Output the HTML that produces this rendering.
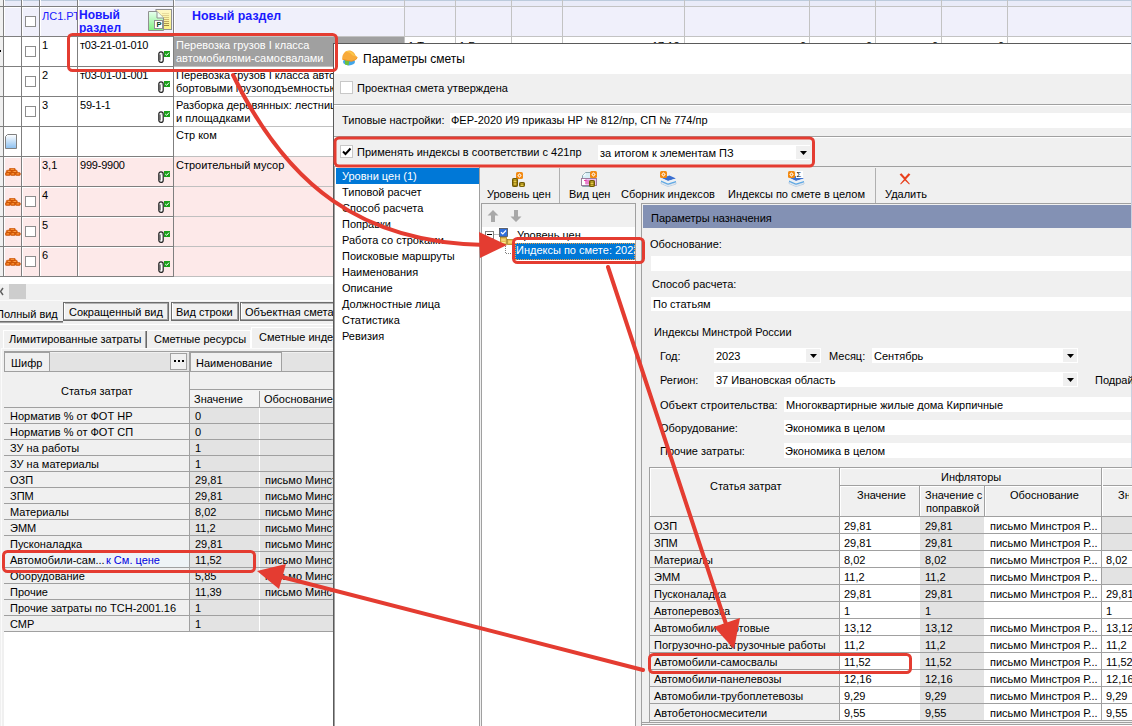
<!DOCTYPE html><html><head><meta charset="utf-8"><style>*{margin:0;padding:0}
html,body{width:1132px;height:726px;overflow:hidden;background:#f0f0f0;font-family:"Liberation Sans",sans-serif;font-size:11px}
div,svg{position:absolute}
.t{white-space:nowrap;line-height:13px}
</style></head><body><div style="left:0px;top:0px;width:1132px;height:278px;background:#ffffff;"></div>
<div style="left:0px;top:0px;width:1132px;height:1px;background:#bccbdc;"></div>
<div style="left:0px;top:1px;width:1132px;height:5px;background:#e9ebf8;"></div>
<div style="left:0px;top:7px;width:1132px;height:29px;background:#f0f0fb;"></div>
<div style="left:0px;top:0px;width:3px;height:278px;background:#f0f0f0;"></div>
<div style="left:4px;top:7px;width:17px;height:1px;background:#ffffff;"></div>
<div style="left:4px;top:37px;width:17px;height:1px;background:#ffffff;"></div>
<div style="left:4px;top:67px;width:17px;height:1px;background:#ffffff;"></div>
<div style="left:4px;top:97px;width:17px;height:1px;background:#ffffff;"></div>
<div style="left:4px;top:127px;width:17px;height:1px;background:#ffffff;"></div>
<div style="left:4px;top:157px;width:17px;height:1px;background:#ffffff;"></div>
<div style="left:4px;top:187px;width:17px;height:1px;background:#ffffff;"></div>
<div style="left:4px;top:217px;width:17px;height:1px;background:#ffffff;"></div>
<div style="left:4px;top:247px;width:17px;height:1px;background:#ffffff;"></div>
<div style="left:4px;top:0px;width:1px;height:276px;background:#ffffff;"></div>
<div style="left:22px;top:7px;width:17px;height:1px;background:#ffffff;"></div>
<div style="left:22px;top:37px;width:17px;height:1px;background:#ffffff;"></div>
<div style="left:22px;top:67px;width:17px;height:1px;background:#ffffff;"></div>
<div style="left:22px;top:97px;width:17px;height:1px;background:#ffffff;"></div>
<div style="left:22px;top:127px;width:17px;height:1px;background:#ffffff;"></div>
<div style="left:22px;top:157px;width:17px;height:1px;background:#ffffff;"></div>
<div style="left:22px;top:187px;width:17px;height:1px;background:#ffffff;"></div>
<div style="left:22px;top:217px;width:17px;height:1px;background:#ffffff;"></div>
<div style="left:22px;top:247px;width:17px;height:1px;background:#ffffff;"></div>
<div style="left:22px;top:0px;width:1px;height:276px;background:#ffffff;"></div>
<div style="left:40px;top:7px;width:37px;height:1px;background:#ffffff;"></div>
<div style="left:40px;top:37px;width:37px;height:1px;background:#ffffff;"></div>
<div style="left:40px;top:67px;width:37px;height:1px;background:#ffffff;"></div>
<div style="left:40px;top:97px;width:37px;height:1px;background:#ffffff;"></div>
<div style="left:40px;top:127px;width:37px;height:1px;background:#ffffff;"></div>
<div style="left:40px;top:157px;width:37px;height:1px;background:#ffffff;"></div>
<div style="left:40px;top:187px;width:37px;height:1px;background:#ffffff;"></div>
<div style="left:40px;top:217px;width:37px;height:1px;background:#ffffff;"></div>
<div style="left:40px;top:247px;width:37px;height:1px;background:#ffffff;"></div>
<div style="left:40px;top:0px;width:1px;height:276px;background:#ffffff;"></div>
<div style="left:78px;top:7px;width:95px;height:1px;background:#ffffff;"></div>
<div style="left:78px;top:37px;width:95px;height:1px;background:#ffffff;"></div>
<div style="left:78px;top:67px;width:95px;height:1px;background:#ffffff;"></div>
<div style="left:78px;top:97px;width:95px;height:1px;background:#ffffff;"></div>
<div style="left:78px;top:127px;width:95px;height:1px;background:#ffffff;"></div>
<div style="left:78px;top:157px;width:95px;height:1px;background:#ffffff;"></div>
<div style="left:78px;top:187px;width:95px;height:1px;background:#ffffff;"></div>
<div style="left:78px;top:217px;width:95px;height:1px;background:#ffffff;"></div>
<div style="left:78px;top:247px;width:95px;height:1px;background:#ffffff;"></div>
<div style="left:78px;top:0px;width:1px;height:276px;background:#ffffff;"></div>
<div style="left:174px;top:7px;width:230px;height:1px;background:#ffffff;"></div>
<div style="left:174px;top:0px;width:1px;height:36px;background:#ffffff;"></div>
<div style="left:5px;top:8px;width:16px;height:28px;background:#f0f0fb;"></div>
<div style="left:5px;top:1px;width:16px;height:5px;background:#e9ebf8;"></div>
<div style="left:23px;top:8px;width:16px;height:28px;background:#f0f0fb;"></div>
<div style="left:23px;top:1px;width:16px;height:5px;background:#e9ebf8;"></div>
<div style="left:41px;top:8px;width:36px;height:28px;background:#f0f0fb;"></div>
<div style="left:41px;top:1px;width:36px;height:5px;background:#e9ebf8;"></div>
<div style="left:79px;top:8px;width:94px;height:28px;background:#f0f0fb;"></div>
<div style="left:79px;top:1px;width:94px;height:5px;background:#e9ebf8;"></div>
<div style="left:175px;top:8px;width:229px;height:28px;background:#f0f0fb;"></div>
<div style="left:175px;top:1px;width:229px;height:5px;background:#e9ebf8;"></div>
<div style="left:5px;top:158px;width:16px;height:28px;background:#fde9e9;"></div>
<div style="left:23px;top:158px;width:16px;height:28px;background:#fde9e9;"></div>
<div style="left:41px;top:158px;width:36px;height:28px;background:#fde9e9;"></div>
<div style="left:79px;top:158px;width:94px;height:28px;background:#fde9e9;"></div>
<div style="left:174px;top:157px;width:160px;height:29px;background:#fde9e9;"></div>
<div style="left:5px;top:188px;width:16px;height:28px;background:#fde9e9;"></div>
<div style="left:23px;top:188px;width:16px;height:28px;background:#fde9e9;"></div>
<div style="left:41px;top:188px;width:36px;height:28px;background:#fde9e9;"></div>
<div style="left:79px;top:188px;width:94px;height:28px;background:#fde9e9;"></div>
<div style="left:174px;top:187px;width:160px;height:29px;background:#fde9e9;"></div>
<div style="left:5px;top:218px;width:16px;height:28px;background:#fde9e9;"></div>
<div style="left:23px;top:218px;width:16px;height:28px;background:#fde9e9;"></div>
<div style="left:41px;top:218px;width:36px;height:28px;background:#fde9e9;"></div>
<div style="left:79px;top:218px;width:94px;height:28px;background:#fde9e9;"></div>
<div style="left:174px;top:217px;width:160px;height:29px;background:#fde9e9;"></div>
<div style="left:5px;top:248px;width:16px;height:28px;background:#fde9e9;"></div>
<div style="left:23px;top:248px;width:16px;height:28px;background:#fde9e9;"></div>
<div style="left:41px;top:248px;width:36px;height:28px;background:#fde9e9;"></div>
<div style="left:79px;top:248px;width:94px;height:28px;background:#fde9e9;"></div>
<div style="left:174px;top:247px;width:160px;height:29px;background:#fde9e9;"></div>
<div style="left:0px;top:6px;width:1133px;height:1px;background:#c3c3c3;"></div>
<div style="left:0px;top:6px;width:174px;height:1px;background:#7f7f7f;"></div>
<div style="left:0px;top:36px;width:1133px;height:1px;background:#c3c3c3;"></div>
<div style="left:0px;top:36px;width:174px;height:1px;background:#7f7f7f;"></div>
<div style="left:0px;top:66px;width:174px;height:1px;background:#7f7f7f;"></div>
<div style="left:174px;top:66px;width:231px;height:1px;background:#c0c0c0;"></div>
<div style="left:0px;top:96px;width:174px;height:1px;background:#7f7f7f;"></div>
<div style="left:174px;top:96px;width:231px;height:1px;background:#c0c0c0;"></div>
<div style="left:0px;top:126px;width:174px;height:1px;background:#7f7f7f;"></div>
<div style="left:174px;top:126px;width:231px;height:1px;background:#c0c0c0;"></div>
<div style="left:0px;top:156px;width:174px;height:1px;background:#7f7f7f;"></div>
<div style="left:174px;top:156px;width:231px;height:1px;background:#c0c0c0;"></div>
<div style="left:0px;top:186px;width:174px;height:1px;background:#7f7f7f;"></div>
<div style="left:174px;top:186px;width:231px;height:1px;background:#c0c0c0;"></div>
<div style="left:0px;top:216px;width:174px;height:1px;background:#7f7f7f;"></div>
<div style="left:174px;top:216px;width:231px;height:1px;background:#c0c0c0;"></div>
<div style="left:0px;top:246px;width:174px;height:1px;background:#7f7f7f;"></div>
<div style="left:174px;top:246px;width:231px;height:1px;background:#c0c0c0;"></div>
<div style="left:0px;top:276px;width:174px;height:1px;background:#7f7f7f;"></div>
<div style="left:174px;top:276px;width:231px;height:1px;background:#c0c0c0;"></div>
<div style="left:3px;top:0px;width:1px;height:277px;background:#7f7f7f;"></div>
<div style="left:21px;top:0px;width:1px;height:277px;background:#7f7f7f;"></div>
<div style="left:39px;top:0px;width:1px;height:277px;background:#7f7f7f;"></div>
<div style="left:77px;top:0px;width:1px;height:277px;background:#7f7f7f;"></div>
<div style="left:173px;top:0px;width:1px;height:277px;background:#7f7f7f;"></div>
<div style="left:0px;top:50px;width:1px;height:2px;background:#000;"></div>
<div style="left:404px;top:0px;width:1px;height:44px;background:#c3c3c3;"></div>
<div style="left:455px;top:0px;width:1px;height:44px;background:#c3c3c3;"></div>
<div style="left:511px;top:0px;width:1px;height:44px;background:#c3c3c3;"></div>
<div style="left:562px;top:0px;width:1px;height:44px;background:#c3c3c3;"></div>
<div style="left:684px;top:0px;width:1px;height:44px;background:#c3c3c3;"></div>
<div style="left:809px;top:0px;width:1px;height:44px;background:#c3c3c3;"></div>
<div style="left:875px;top:0px;width:1px;height:44px;background:#c3c3c3;"></div>
<div style="left:941px;top:0px;width:1px;height:44px;background:#c3c3c3;"></div>
<div style="left:1007px;top:0px;width:1px;height:44px;background:#c3c3c3;"></div>
<div style="left:174px;top:37px;width:230px;height:29px;background:#a0a0a0;"></div>
<div style="left:25px;top:16px;width:11px;height:11px;box-sizing:border-box;border:1px solid #8d8d8d;background:#ffffff;"></div>
<div class="t" style="left:42px;top:10px;font-size:11px;color:#1a1aff;font-weight:400;width:35px;overflow:hidden;">ЛС1.РТ</div>
<div class="t" style="left:79px;top:9px;font-size:12px;color:#1a1aff;font-weight:700;">Новый</div>
<div class="t" style="left:79px;top:22px;font-size:12px;color:#1a1aff;font-weight:700;">раздел</div>
<div class="t" style="left:192px;top:10px;font-size:12.4px;color:#1a1aff;font-weight:700;">Новый раздел</div>
<svg style="left:147px;top:8px" width="26" height="24" viewBox="0 0 26 24">
<defs><linearGradient id="gg" x1="0" y1="0" x2="0" y2="1"><stop offset="0" stop-color="#e8fff0"/><stop offset="1" stop-color="#80f080"/></linearGradient>
<linearGradient id="yg" x1="0" y1="0" x2="0" y2="1"><stop offset="0" stop-color="#fff8c8"/><stop offset="1" stop-color="#f8f080"/></linearGradient></defs>
<rect x="9" y="1.5" width="15.5" height="20" fill="url(#yg)" stroke="#909090"/>
<g stroke-width="1"><line x1="15" y1="5.5" x2="22" y2="5.5" stroke="#e8dca0"/><line x1="15" y1="7.5" x2="22" y2="7.5" stroke="#e0d090"/><line x1="15" y1="9.5" x2="22" y2="9.5" stroke="#d8c880"/><line x1="15" y1="11.5" x2="22" y2="11.5" stroke="#d0b870"/><line x1="15" y1="13.5" x2="22" y2="13.5" stroke="#c0a860"/><line x1="15" y1="15.5" x2="22" y2="15.5" stroke="#b09850"/><line x1="15" y1="17.5" x2="22" y2="17.5" stroke="#a08840"/></g>
<path d="M1.5 3.5 H10 L16.5 10 V22.5 H1.5 Z" fill="url(#gg)" stroke="#909090"/>
<path d="M10 3.5 V10 H16.5" fill="#f0fff4" stroke="#909090"/>
<rect x="7.5" y="12.5" width="8" height="8" fill="#fff" stroke="#909090" stroke-width="1"/>
<text x="9.4" y="19" font-size="7.5" font-family="Liberation Sans" font-weight="700" fill="#042">P</text>
</svg>
<div style="left:25px;top:46px;width:11px;height:11px;box-sizing:border-box;border:1px solid #8d8d8d;background:#ffffff;"></div>
<div class="t" style="left:42px;top:39px;font-size:11px;color:#000;font-weight:400;">1</div>
<div class="t" style="left:80px;top:39px;font-size:11px;color:#000;font-weight:400;letter-spacing:-0.22px">т03-21-01-010</div>
<svg style="left:158px;top:51px" width="13" height="12" viewBox="0 0 13 12">
<rect x="0.8" y="0.8" width="4.4" height="10.6" rx="2.2" fill="#fff" stroke="#222" stroke-width="1.2"/><path d="M2 3.5 V9.5" stroke="#222" stroke-width="1"/><path d="M4.2 2.2 V4" stroke="#777" stroke-width="0.6"/>
<rect x="6" y="0" width="6" height="6" fill="#1aa01a"/>
<path d="M7.2 3 L8.7 4.3 L11 1.6" stroke="#fff" stroke-width="1" fill="none"/>
</svg>
<div class="t" style="left:176px;top:39px;font-size:11px;color:#ffffff;font-weight:400;width:157px;overflow:hidden;">Перевозка грузов I класса</div>
<div class="t" style="left:176px;top:52px;font-size:11px;color:#ffffff;font-weight:400;width:157px;overflow:hidden;">автомобилями-самосвалами</div>
<div style="left:25px;top:76px;width:11px;height:11px;box-sizing:border-box;border:1px solid #8d8d8d;background:#ffffff;"></div>
<div class="t" style="left:42px;top:69px;font-size:11px;color:#000;font-weight:400;">2</div>
<div class="t" style="left:80px;top:69px;font-size:11px;color:#000;font-weight:400;letter-spacing:-0.22px">т03-01-01-001</div>
<svg style="left:158px;top:81px" width="13" height="12" viewBox="0 0 13 12">
<rect x="0.8" y="0.8" width="4.4" height="10.6" rx="2.2" fill="#fff" stroke="#222" stroke-width="1.2"/><path d="M2 3.5 V9.5" stroke="#222" stroke-width="1"/><path d="M4.2 2.2 V4" stroke="#777" stroke-width="0.6"/>
<rect x="6" y="0" width="6" height="6" fill="#1aa01a"/>
<path d="M7.2 3 L8.7 4.3 L11 1.6" stroke="#fff" stroke-width="1" fill="none"/>
</svg>
<div class="t" style="left:176px;top:69px;font-size:11px;color:#000;font-weight:400;width:157px;overflow:hidden;">Перевозка грузов I класса автомобилями</div>
<div class="t" style="left:176px;top:82px;font-size:11px;color:#000;font-weight:400;width:157px;overflow:hidden;">бортовыми грузоподъемностью</div>
<div style="left:25px;top:106px;width:11px;height:11px;box-sizing:border-box;border:1px solid #8d8d8d;background:#ffffff;"></div>
<div class="t" style="left:42px;top:99px;font-size:11px;color:#000;font-weight:400;">3</div>
<div class="t" style="left:80px;top:99px;font-size:11px;color:#000;font-weight:400;letter-spacing:-0.22px">59-1-1</div>
<svg style="left:158px;top:111px" width="13" height="12" viewBox="0 0 13 12">
<rect x="0.8" y="0.8" width="4.4" height="10.6" rx="2.2" fill="#fff" stroke="#222" stroke-width="1.2"/><path d="M2 3.5 V9.5" stroke="#222" stroke-width="1"/><path d="M4.2 2.2 V4" stroke="#777" stroke-width="0.6"/>
<rect x="6" y="0" width="6" height="6" fill="#1aa01a"/>
<path d="M7.2 3 L8.7 4.3 L11 1.6" stroke="#fff" stroke-width="1" fill="none"/>
</svg>
<div class="t" style="left:176px;top:99px;font-size:11px;color:#000;font-weight:400;width:157px;overflow:hidden;">Разборка деревянных:  лестниц</div>
<div class="t" style="left:176px;top:112px;font-size:11px;color:#000;font-weight:400;width:157px;overflow:hidden;">и площадками</div>
<div class="t" style="left:176px;top:129px;font-size:11px;color:#000;font-weight:400;width:157px;overflow:hidden;">Стр ком</div>
<svg style="left:5px;top:134px" width="12" height="15" viewBox="0 0 12 15">
<defs><linearGradient id="dg" x1="0" y1="0" x2="0" y2="1"><stop offset="0" stop-color="#ffffff"/><stop offset="1" stop-color="#8cc0f0"/></linearGradient></defs>
<path d="M2.5 0.5 H11.5 V14.5 H0.5 V2.5 Z" fill="url(#dg)" stroke="#808080"/>
</svg>
<div class="t" style="left:42px;top:159px;font-size:11px;color:#000;font-weight:400;">3,1</div>
<div class="t" style="left:80px;top:159px;font-size:11px;color:#000;font-weight:400;letter-spacing:-0.22px">999-9900</div>
<svg style="left:158px;top:171px" width="13" height="12" viewBox="0 0 13 12">
<rect x="0.8" y="0.8" width="4.4" height="10.6" rx="2.2" fill="#fff" stroke="#222" stroke-width="1.2"/><path d="M2 3.5 V9.5" stroke="#222" stroke-width="1"/><path d="M4.2 2.2 V4" stroke="#777" stroke-width="0.6"/>
<rect x="6" y="0" width="6" height="6" fill="#1aa01a"/>
<path d="M7.2 3 L8.7 4.3 L11 1.6" stroke="#fff" stroke-width="1" fill="none"/>
</svg>
<div class="t" style="left:176px;top:159px;font-size:11px;color:#000;font-weight:400;width:157px;overflow:hidden;">Строительный мусор</div>
<svg style="left:5px;top:168px" width="16" height="8" viewBox="0 0 16 8">
<g fill="#e8680c" stroke="#b84800" stroke-width="0.6">
<rect x="4.3" y="0.3" width="6" height="2.8" rx="1"/>
<rect x="1.3" y="2.3" width="5.5" height="2.8" rx="1"/><rect x="6.8" y="2.3" width="5.5" height="2.8" rx="1"/>
<rect x="0.3" y="4.6" width="5" height="2.8" rx="1"/><rect x="5.3" y="4.6" width="5" height="2.8" rx="1"/><rect x="10.3" y="4.6" width="5" height="2.8" rx="1"/>
</g>
<g stroke="#ffb060" stroke-width="0.7"><line x1="6" y1="1.3" x2="9" y2="1.3"/><line x1="3" y1="3.5" x2="5.5" y2="3.5"/><line x1="8.5" y1="3.5" x2="11" y2="3.5"/><line x1="1.8" y1="5.8" x2="4" y2="5.8"/><line x1="6.8" y1="5.8" x2="9" y2="5.8"/><line x1="11.8" y1="5.8" x2="14" y2="5.8"/></g>
</svg>
<div style="left:25px;top:196px;width:11px;height:11px;box-sizing:border-box;border:1px solid #8d8d8d;background:#ffffff;"></div>
<div class="t" style="left:42px;top:189px;font-size:11px;color:#000;font-weight:400;">4</div>
<svg style="left:158px;top:201px" width="13" height="12" viewBox="0 0 13 12">
<rect x="0.8" y="0.8" width="4.4" height="10.6" rx="2.2" fill="#fff" stroke="#222" stroke-width="1.2"/><path d="M2 3.5 V9.5" stroke="#222" stroke-width="1"/><path d="M4.2 2.2 V4" stroke="#777" stroke-width="0.6"/>
<rect x="6" y="0" width="6" height="6" fill="#1aa01a"/>
<path d="M7.2 3 L8.7 4.3 L11 1.6" stroke="#fff" stroke-width="1" fill="none"/>
</svg>
<svg style="left:5px;top:198px" width="16" height="8" viewBox="0 0 16 8">
<g fill="#e8680c" stroke="#b84800" stroke-width="0.6">
<rect x="4.3" y="0.3" width="6" height="2.8" rx="1"/>
<rect x="1.3" y="2.3" width="5.5" height="2.8" rx="1"/><rect x="6.8" y="2.3" width="5.5" height="2.8" rx="1"/>
<rect x="0.3" y="4.6" width="5" height="2.8" rx="1"/><rect x="5.3" y="4.6" width="5" height="2.8" rx="1"/><rect x="10.3" y="4.6" width="5" height="2.8" rx="1"/>
</g>
<g stroke="#ffb060" stroke-width="0.7"><line x1="6" y1="1.3" x2="9" y2="1.3"/><line x1="3" y1="3.5" x2="5.5" y2="3.5"/><line x1="8.5" y1="3.5" x2="11" y2="3.5"/><line x1="1.8" y1="5.8" x2="4" y2="5.8"/><line x1="6.8" y1="5.8" x2="9" y2="5.8"/><line x1="11.8" y1="5.8" x2="14" y2="5.8"/></g>
</svg>
<div style="left:25px;top:226px;width:11px;height:11px;box-sizing:border-box;border:1px solid #8d8d8d;background:#ffffff;"></div>
<div class="t" style="left:42px;top:219px;font-size:11px;color:#000;font-weight:400;">5</div>
<svg style="left:158px;top:231px" width="13" height="12" viewBox="0 0 13 12">
<rect x="0.8" y="0.8" width="4.4" height="10.6" rx="2.2" fill="#fff" stroke="#222" stroke-width="1.2"/><path d="M2 3.5 V9.5" stroke="#222" stroke-width="1"/><path d="M4.2 2.2 V4" stroke="#777" stroke-width="0.6"/>
<rect x="6" y="0" width="6" height="6" fill="#1aa01a"/>
<path d="M7.2 3 L8.7 4.3 L11 1.6" stroke="#fff" stroke-width="1" fill="none"/>
</svg>
<svg style="left:5px;top:228px" width="16" height="8" viewBox="0 0 16 8">
<g fill="#e8680c" stroke="#b84800" stroke-width="0.6">
<rect x="4.3" y="0.3" width="6" height="2.8" rx="1"/>
<rect x="1.3" y="2.3" width="5.5" height="2.8" rx="1"/><rect x="6.8" y="2.3" width="5.5" height="2.8" rx="1"/>
<rect x="0.3" y="4.6" width="5" height="2.8" rx="1"/><rect x="5.3" y="4.6" width="5" height="2.8" rx="1"/><rect x="10.3" y="4.6" width="5" height="2.8" rx="1"/>
</g>
<g stroke="#ffb060" stroke-width="0.7"><line x1="6" y1="1.3" x2="9" y2="1.3"/><line x1="3" y1="3.5" x2="5.5" y2="3.5"/><line x1="8.5" y1="3.5" x2="11" y2="3.5"/><line x1="1.8" y1="5.8" x2="4" y2="5.8"/><line x1="6.8" y1="5.8" x2="9" y2="5.8"/><line x1="11.8" y1="5.8" x2="14" y2="5.8"/></g>
</svg>
<div style="left:25px;top:256px;width:11px;height:11px;box-sizing:border-box;border:1px solid #8d8d8d;background:#ffffff;"></div>
<div class="t" style="left:42px;top:249px;font-size:11px;color:#000;font-weight:400;">6</div>
<svg style="left:158px;top:261px" width="13" height="12" viewBox="0 0 13 12">
<rect x="0.8" y="0.8" width="4.4" height="10.6" rx="2.2" fill="#fff" stroke="#222" stroke-width="1.2"/><path d="M2 3.5 V9.5" stroke="#222" stroke-width="1"/><path d="M4.2 2.2 V4" stroke="#777" stroke-width="0.6"/>
<rect x="6" y="0" width="6" height="6" fill="#1aa01a"/>
<path d="M7.2 3 L8.7 4.3 L11 1.6" stroke="#fff" stroke-width="1" fill="none"/>
</svg>
<svg style="left:5px;top:258px" width="16" height="8" viewBox="0 0 16 8">
<g fill="#e8680c" stroke="#b84800" stroke-width="0.6">
<rect x="4.3" y="0.3" width="6" height="2.8" rx="1"/>
<rect x="1.3" y="2.3" width="5.5" height="2.8" rx="1"/><rect x="6.8" y="2.3" width="5.5" height="2.8" rx="1"/>
<rect x="0.3" y="4.6" width="5" height="2.8" rx="1"/><rect x="5.3" y="4.6" width="5" height="2.8" rx="1"/><rect x="10.3" y="4.6" width="5" height="2.8" rx="1"/>
</g>
<g stroke="#ffb060" stroke-width="0.7"><line x1="6" y1="1.3" x2="9" y2="1.3"/><line x1="3" y1="3.5" x2="5.5" y2="3.5"/><line x1="8.5" y1="3.5" x2="11" y2="3.5"/><line x1="1.8" y1="5.8" x2="4" y2="5.8"/><line x1="6.8" y1="5.8" x2="9" y2="5.8"/><line x1="11.8" y1="5.8" x2="14" y2="5.8"/></g>
</svg>
<div class="t" style="left:408px;top:40px;font-size:11px;color:#000;font-weight:400;width:40px;overflow:hidden;">1 Т</div>
<div class="t" style="left:459px;top:40px;font-size:11px;color:#000;font-weight:400;width:40px;overflow:hidden;">1 Б</div>
<div class="t" style="left:652px;top:40px;font-size:11px;color:#000;font-weight:400;">17,12</div>
<div class="t" style="left:800px;top:40px;font-size:11px;color:#000;font-weight:400;">0</div>
<div class="t" style="left:866px;top:40px;font-size:11px;color:#000;font-weight:400;">0</div>
<div class="t" style="left:932px;top:40px;font-size:11px;color:#000;font-weight:400;">0</div>
<div class="t" style="left:998px;top:40px;font-size:11px;color:#000;font-weight:400;">0</div>
<div style="left:0px;top:277px;width:333px;height:7px;background:#ffffff;"></div>
<div style="left:0px;top:284px;width:333px;height:442px;background:#f0f0f0;"></div>
<div style="left:9px;top:284px;width:17px;height:15px;background:#cdcdcd;"></div>
<svg style="left:0px;top:287px" width="4" height="9"><path d="M3 1 L0.5 4.5 L3 8" stroke="#606060" stroke-width="1.5" fill="none"/></svg>
<div style="left:0px;top:300px;width:334px;height:1px;background:#fafafa;"></div>
<div style="left:0px;top:301px;width:62px;height:21px;background:#f0f0f0;"></div>
<div style="left:0px;top:321px;width:63px;height:1px;background:#6d6d6d;"></div>
<div style="left:0px;top:322px;width:63px;height:1px;background:#a0a0a0;"></div>
<div class="t" style="left:-4px;top:308px;font-size:11px;color:#000;font-weight:400;">Полный вид</div>
<div style="left:63px;top:302px;width:106px;height:19px;background:#f0f0f0;"></div>
<div style="left:63px;top:302px;width:106px;height:1px;background:#6d6d6d;"></div>
<div style="left:63px;top:303px;width:106px;height:1px;background:#b0b0b0;"></div>
<div style="left:63px;top:302px;width:1px;height:19px;background:#6d6d6d;"></div>
<div style="left:64px;top:303px;width:1px;height:18px;background:#ffffff;"></div>
<div style="left:168px;top:302px;width:1px;height:19px;background:#6d6d6d;"></div>
<div style="left:167px;top:303px;width:1px;height:17px;background:#a0a0a0;"></div>
<div style="left:63px;top:320px;width:106px;height:1px;background:#6d6d6d;"></div>
<div style="left:64px;top:319px;width:104px;height:1px;background:#a0a0a0;"></div>
<div class="t" style="left:69px;top:306px;font-size:11px;color:#000;font-weight:400;width:264px;overflow:hidden;">Сокращенный вид</div>
<div style="left:171px;top:302px;width:68px;height:19px;background:#f0f0f0;"></div>
<div style="left:171px;top:302px;width:68px;height:1px;background:#6d6d6d;"></div>
<div style="left:171px;top:303px;width:68px;height:1px;background:#b0b0b0;"></div>
<div style="left:171px;top:302px;width:1px;height:19px;background:#6d6d6d;"></div>
<div style="left:172px;top:303px;width:1px;height:18px;background:#ffffff;"></div>
<div style="left:238px;top:302px;width:1px;height:19px;background:#6d6d6d;"></div>
<div style="left:237px;top:303px;width:1px;height:17px;background:#a0a0a0;"></div>
<div style="left:171px;top:320px;width:68px;height:1px;background:#6d6d6d;"></div>
<div style="left:172px;top:319px;width:66px;height:1px;background:#a0a0a0;"></div>
<div class="t" style="left:176px;top:306px;font-size:11px;color:#000;font-weight:400;width:157px;overflow:hidden;">Вид строки</div>
<div style="left:240px;top:302px;width:101px;height:19px;background:#f0f0f0;"></div>
<div style="left:240px;top:302px;width:101px;height:1px;background:#6d6d6d;"></div>
<div style="left:240px;top:303px;width:101px;height:1px;background:#b0b0b0;"></div>
<div style="left:240px;top:302px;width:1px;height:19px;background:#6d6d6d;"></div>
<div style="left:241px;top:303px;width:1px;height:18px;background:#ffffff;"></div>
<div style="left:340px;top:302px;width:1px;height:19px;background:#6d6d6d;"></div>
<div style="left:339px;top:303px;width:1px;height:17px;background:#a0a0a0;"></div>
<div style="left:240px;top:320px;width:101px;height:1px;background:#6d6d6d;"></div>
<div style="left:241px;top:319px;width:99px;height:1px;background:#a0a0a0;"></div>
<div class="t" style="left:245px;top:306px;font-size:11px;color:#000;font-weight:400;width:88px;overflow:hidden;">Объектная смета</div>
<div style="left:0px;top:324px;width:334px;height:1px;background:#ffffff;"></div>
<div style="left:3px;top:330px;width:144px;height:18px;background:#f0f0f0;"></div>
<div style="left:3px;top:330px;width:144px;height:1px;background:#ffffff;"></div>
<div style="left:3px;top:330px;width:1px;height:18px;background:#ffffff;"></div>
<div style="left:146px;top:331px;width:1px;height:17px;background:#696969;"></div>
<div style="left:145px;top:331px;width:1px;height:17px;background:#a0a0a0;"></div>
<div class="t" style="left:9px;top:333px;font-size:11px;color:#000;font-weight:400;">Лимитированные затраты</div>
<div style="left:148px;top:330px;width:103px;height:18px;background:#f0f0f0;"></div>
<div style="left:148px;top:330px;width:103px;height:1px;background:#ffffff;"></div>
<div style="left:250px;top:331px;width:1px;height:17px;background:#ffffff;"></div>
<div class="t" style="left:154px;top:333px;font-size:11px;color:#000;font-weight:400;">Сметные ресурсы</div>
<div style="left:251px;top:327px;width:82px;height:21px;background:#f0f0f0;"></div>
<div style="left:251px;top:327px;width:83px;height:1px;background:#ffffff;"></div>
<div style="left:251px;top:327px;width:1px;height:22px;background:#ffffff;"></div>
<div class="t" style="left:259px;top:331px;font-size:11px;color:#000;font-weight:400;width:74px;overflow:hidden;">Сметные индексы</div>
<div style="left:0px;top:348px;width:333px;height:378px;background:#f0f0f0;"></div>
<div style="left:1px;top:348px;width:1px;height:379px;background:#fbfbfb;"></div>
<div style="left:1px;top:348px;width:333px;height:1px;background:#fbfbfb;"></div>
<div style="left:5px;top:372px;width:328px;height:354px;background:#ffffff;"></div>
<div style="left:4px;top:351px;width:1px;height:376px;background:#7a7a7a;"></div>
<div style="left:4px;top:352px;width:329px;height:20px;background:#f0f0f0;"></div>
<div style="left:4px;top:351px;width:330px;height:1px;background:#a0a0a0;"></div>
<div style="left:4px;top:352px;width:46px;height:20px;box-sizing:border-box;border:1px solid #a0a0a0;background:#f0f0f0;"></div>
<div class="t" style="left:11px;top:357px;font-size:11px;color:#000;font-weight:400;">Шифр</div>
<div style="left:50px;top:353px;width:139px;height:18px;background:#e3e3e3;"></div>
<div style="left:170px;top:353px;width:17px;height:17px;box-sizing:border-box;border:1px solid #a0a0a0;background:#f0f0f0;"></div>
<svg style="left:173px;top:360px" width="12" height="3"><rect x="1" y="0" width="2" height="2" fill="#000"/><rect x="5" y="0" width="2" height="2" fill="#000"/><rect x="9" y="0" width="2" height="2" fill="#000"/></svg>
<div style="left:189px;top:352px;width:1px;height:20px;background:#a0a0a0;"></div>
<div style="left:190px;top:352px;width:92px;height:20px;box-sizing:border-box;border:1px solid #a0a0a0;background:#f0f0f0;"></div>
<div class="t" style="left:196px;top:357px;font-size:11px;color:#000;font-weight:400;">Наименование</div>
<div style="left:282px;top:353px;width:51px;height:18px;background:#e3e3e3;"></div>
<div style="left:4px;top:371px;width:330px;height:1px;background:#a0a0a0;"></div>
<div style="left:4px;top:372px;width:329px;height:35px;background:#f0f0f0;"></div>
<div style="left:190px;top:389px;width:144px;height:1px;background:#a0a0a0;"></div>
<div style="left:190px;top:390px;width:143px;height:17px;background:#f3f3f3;"></div>
<div style="left:259px;top:391px;width:1px;height:16px;background:#a0a0a0;"></div>
<div style="left:189px;top:372px;width:1px;height:260px;background:#a0a0a0;"></div>
<div class="t" style="left:61px;top:385px;font-size:11px;color:#000;font-weight:400;">Статья затрат</div>
<div class="t" style="left:194px;top:393px;font-size:11px;color:#000;font-weight:400;">Значение</div>
<div class="t" style="left:264px;top:393px;font-size:11px;color:#000;font-weight:400;width:69px;overflow:hidden;">Обоснование</div>
<div style="left:4px;top:407px;width:330px;height:1px;background:#a0a0a0;"></div>
<div style="left:4px;top:408px;width:185px;height:15px;background:#f0f0f0;"></div>
<div style="left:190px;top:408px;width:69px;height:15px;background:#e3e3e3;"></div>
<div style="left:260px;top:408px;width:73px;height:15px;background:#e3e3e3;"></div>
<div style="left:4px;top:423px;width:330px;height:1px;background:#a0a0a0;"></div>
<div class="t" style="left:10px;top:410px;font-size:11px;color:#000;font-weight:400;">Норматив % от ФОТ НР</div>
<div class="t" style="left:195px;top:410px;font-size:11px;color:#000;font-weight:400;">0</div>
<div style="left:4px;top:424px;width:185px;height:15px;background:#f0f0f0;"></div>
<div style="left:190px;top:424px;width:69px;height:15px;background:#e3e3e3;"></div>
<div style="left:260px;top:424px;width:73px;height:15px;background:#e3e3e3;"></div>
<div style="left:4px;top:439px;width:330px;height:1px;background:#a0a0a0;"></div>
<div class="t" style="left:10px;top:426px;font-size:11px;color:#000;font-weight:400;">Норматив % от ФОТ СП</div>
<div class="t" style="left:195px;top:426px;font-size:11px;color:#000;font-weight:400;">0</div>
<div style="left:4px;top:440px;width:185px;height:15px;background:#f0f0f0;"></div>
<div style="left:190px;top:440px;width:69px;height:15px;background:#e3e3e3;"></div>
<div style="left:260px;top:440px;width:73px;height:15px;background:#e3e3e3;"></div>
<div style="left:4px;top:455px;width:330px;height:1px;background:#a0a0a0;"></div>
<div class="t" style="left:10px;top:442px;font-size:11px;color:#000;font-weight:400;">ЗУ на работы</div>
<div class="t" style="left:195px;top:442px;font-size:11px;color:#000;font-weight:400;">1</div>
<div style="left:4px;top:456px;width:185px;height:15px;background:#f0f0f0;"></div>
<div style="left:190px;top:456px;width:69px;height:15px;background:#e3e3e3;"></div>
<div style="left:260px;top:456px;width:73px;height:15px;background:#e3e3e3;"></div>
<div style="left:4px;top:471px;width:330px;height:1px;background:#a0a0a0;"></div>
<div class="t" style="left:10px;top:458px;font-size:11px;color:#000;font-weight:400;">ЗУ на материалы</div>
<div class="t" style="left:195px;top:458px;font-size:11px;color:#000;font-weight:400;">1</div>
<div style="left:4px;top:472px;width:185px;height:15px;background:#f0f0f0;"></div>
<div style="left:190px;top:472px;width:69px;height:15px;background:#e3e3e3;"></div>
<div style="left:260px;top:472px;width:73px;height:15px;background:#e3e3e3;"></div>
<div style="left:4px;top:487px;width:330px;height:1px;background:#a0a0a0;"></div>
<div class="t" style="left:10px;top:474px;font-size:11px;color:#000;font-weight:400;">ОЗП</div>
<div class="t" style="left:195px;top:474px;font-size:11px;color:#000;font-weight:400;">29,81</div>
<div class="t" style="left:265px;top:474px;font-size:11px;color:#000;font-weight:400;width:68px;overflow:hidden;">письмо Минстроя</div>
<div style="left:4px;top:488px;width:185px;height:15px;background:#f0f0f0;"></div>
<div style="left:190px;top:488px;width:69px;height:15px;background:#e3e3e3;"></div>
<div style="left:260px;top:488px;width:73px;height:15px;background:#e3e3e3;"></div>
<div style="left:4px;top:503px;width:330px;height:1px;background:#a0a0a0;"></div>
<div class="t" style="left:10px;top:490px;font-size:11px;color:#000;font-weight:400;">ЗПМ</div>
<div class="t" style="left:195px;top:490px;font-size:11px;color:#000;font-weight:400;">29,81</div>
<div class="t" style="left:265px;top:490px;font-size:11px;color:#000;font-weight:400;width:68px;overflow:hidden;">письмо Минстроя</div>
<div style="left:4px;top:504px;width:185px;height:15px;background:#f0f0f0;"></div>
<div style="left:190px;top:504px;width:69px;height:15px;background:#e3e3e3;"></div>
<div style="left:260px;top:504px;width:73px;height:15px;background:#e3e3e3;"></div>
<div style="left:4px;top:519px;width:330px;height:1px;background:#a0a0a0;"></div>
<div class="t" style="left:10px;top:506px;font-size:11px;color:#000;font-weight:400;">Материалы</div>
<div class="t" style="left:195px;top:506px;font-size:11px;color:#000;font-weight:400;">8,02</div>
<div class="t" style="left:265px;top:506px;font-size:11px;color:#000;font-weight:400;width:68px;overflow:hidden;">письмо Минстроя</div>
<div style="left:4px;top:520px;width:185px;height:15px;background:#f0f0f0;"></div>
<div style="left:190px;top:520px;width:69px;height:15px;background:#e3e3e3;"></div>
<div style="left:260px;top:520px;width:73px;height:15px;background:#e3e3e3;"></div>
<div style="left:4px;top:535px;width:330px;height:1px;background:#a0a0a0;"></div>
<div class="t" style="left:10px;top:522px;font-size:11px;color:#000;font-weight:400;">ЭММ</div>
<div class="t" style="left:195px;top:522px;font-size:11px;color:#000;font-weight:400;">11,2</div>
<div class="t" style="left:265px;top:522px;font-size:11px;color:#000;font-weight:400;width:68px;overflow:hidden;">письмо Минстроя</div>
<div style="left:4px;top:536px;width:185px;height:15px;background:#f0f0f0;"></div>
<div style="left:190px;top:536px;width:69px;height:15px;background:#e3e3e3;"></div>
<div style="left:260px;top:536px;width:73px;height:15px;background:#e3e3e3;"></div>
<div style="left:4px;top:551px;width:330px;height:1px;background:#a0a0a0;"></div>
<div class="t" style="left:10px;top:538px;font-size:11px;color:#000;font-weight:400;">Пусконаладка</div>
<div class="t" style="left:195px;top:538px;font-size:11px;color:#000;font-weight:400;">29,81</div>
<div class="t" style="left:265px;top:538px;font-size:11px;color:#000;font-weight:400;width:68px;overflow:hidden;">письмо Минстроя</div>
<div style="left:4px;top:552px;width:185px;height:15px;background:#eef3f6;"></div>
<div style="left:190px;top:552px;width:69px;height:15px;background:#e3e3e3;"></div>
<div style="left:260px;top:552px;width:73px;height:15px;background:#e3e3e3;"></div>
<div style="left:4px;top:567px;width:330px;height:1px;background:#a0a0a0;"></div>
<div class="t" style="left:10px;top:554px;font-size:11px;color:#000;font-weight:400;">Автомобили-сам...</div>
<div class="t" style="left:106px;top:554px;font-size:11px;color:#0000e0;font-weight:400;">к См. цене</div>
<div class="t" style="left:195px;top:554px;font-size:11px;color:#000;font-weight:400;">11,52</div>
<div class="t" style="left:265px;top:554px;font-size:11px;color:#000;font-weight:400;width:68px;overflow:hidden;">письмо Минстроя</div>
<div style="left:4px;top:568px;width:185px;height:15px;background:#f0f0f0;"></div>
<div style="left:190px;top:568px;width:69px;height:15px;background:#e3e3e3;"></div>
<div style="left:260px;top:568px;width:73px;height:15px;background:#e3e3e3;"></div>
<div style="left:4px;top:583px;width:330px;height:1px;background:#a0a0a0;"></div>
<div class="t" style="left:10px;top:570px;font-size:11px;color:#000;font-weight:400;">Оборудование</div>
<div class="t" style="left:195px;top:570px;font-size:11px;color:#000;font-weight:400;">5,85</div>
<div class="t" style="left:265px;top:570px;font-size:11px;color:#000;font-weight:400;width:68px;overflow:hidden;">письмо Минстроя</div>
<div style="left:4px;top:584px;width:185px;height:15px;background:#f0f0f0;"></div>
<div style="left:190px;top:584px;width:69px;height:15px;background:#e3e3e3;"></div>
<div style="left:260px;top:584px;width:73px;height:15px;background:#e3e3e3;"></div>
<div style="left:4px;top:599px;width:330px;height:1px;background:#a0a0a0;"></div>
<div class="t" style="left:10px;top:586px;font-size:11px;color:#000;font-weight:400;">Прочие</div>
<div class="t" style="left:195px;top:586px;font-size:11px;color:#000;font-weight:400;">11,39</div>
<div class="t" style="left:265px;top:586px;font-size:11px;color:#000;font-weight:400;width:68px;overflow:hidden;">письмо Минстроя</div>
<div style="left:4px;top:600px;width:185px;height:15px;background:#f0f0f0;"></div>
<div style="left:190px;top:600px;width:69px;height:15px;background:#e3e3e3;"></div>
<div style="left:260px;top:600px;width:73px;height:15px;background:#e3e3e3;"></div>
<div style="left:4px;top:615px;width:330px;height:1px;background:#a0a0a0;"></div>
<div class="t" style="left:10px;top:602px;font-size:11px;color:#000;font-weight:400;">Прочие затраты по ТСН-2001.16</div>
<div class="t" style="left:195px;top:602px;font-size:11px;color:#000;font-weight:400;">1</div>
<div style="left:4px;top:616px;width:185px;height:15px;background:#f0f0f0;"></div>
<div style="left:190px;top:616px;width:69px;height:15px;background:#e3e3e3;"></div>
<div style="left:260px;top:616px;width:73px;height:15px;background:#e3e3e3;"></div>
<div style="left:4px;top:631px;width:330px;height:1px;background:#a0a0a0;"></div>
<div class="t" style="left:10px;top:618px;font-size:11px;color:#000;font-weight:400;">СМР</div>
<div class="t" style="left:195px;top:618px;font-size:11px;color:#000;font-weight:400;">1</div>
<div style="left:4px;top:632px;width:185px;height:94px;background:#ffffff;"></div>
<div style="left:190px;top:632px;width:143px;height:94px;background:#ffffff;"></div>
<div style="left:333px;top:43px;width:799px;height:683px;background:#f0f0f0;"></div>
<div style="left:333px;top:43px;width:1px;height:684px;background:#5a5a5a;"></div>
<div style="left:333px;top:43px;width:800px;height:1px;background:#5a5a5a;"></div>
<div style="left:334px;top:44px;width:798px;height:30px;background:#ffffff;"></div>
<svg style="left:338px;top:47px" width="24" height="22" viewBox="0 0 24 22">
<ellipse cx="11" cy="14.8" rx="6" ry="3.6" fill="#42a6ea"/>
<path d="M7 12 L11.5 13 L10.5 18.4 L7 17.4 Z" fill="#6cc040"/>
<path d="M4.2 12.2 C4.2 6.5 7.5 3.6 11 3.6 C14.5 3.6 16.5 6 17.5 8.5 L19.8 10.5 C18.5 12.5 16 14 13 14.2 L4.5 12.5 Z" fill="#f8aa3a"/>
<path d="M7 4.6 C11 3 15 4.5 17.6 9.5 L19.5 10.6 C17.5 9 15 8.8 14 8 C12.5 6 10 5 7 4.6Z" fill="#fbc74a"/>
<path d="M4.5 12.3 L13 14.2 C15.5 14 17.5 13 19 11.2" stroke="#f39018" stroke-width="0.9" fill="none"/>
</svg>
<div class="t" style="left:363px;top:53px;font-size:12px;color:#000;font-weight:400;">Параметры сметы</div>
<div style="left:340px;top:81px;width:13px;height:13px;box-sizing:border-box;border:1px solid #c8c8c8;background:#ffffff;"></div>
<div class="t" style="left:357px;top:82px;font-size:11px;color:#000;font-weight:400;">Проектная смета утверждена</div>
<div style="left:334px;top:104px;width:799px;height:1px;background:#a0a0a0;"></div>
<div style="left:334px;top:105px;width:799px;height:1px;background:#ffffff;"></div>
<div class="t" style="left:342px;top:114px;font-size:11px;color:#000;font-weight:400;">Типовые настройки:</div>
<div style="left:450px;top:113px;width:682px;height:15px;background:#ffffff;"></div>
<div class="t" style="left:451px;top:114px;font-size:11px;color:#000;font-weight:400;">ФЕР-2020 И9 приказы НР № 812/пр, СП № 774/пр</div>
<div style="left:334px;top:136px;width:799px;height:1px;background:#a0a0a0;"></div>
<div style="left:334px;top:137px;width:799px;height:1px;background:#ffffff;"></div>
<div style="left:340px;top:145px;width:13px;height:13px;box-sizing:border-box;border:1px solid #c8c8c8;background:#ffffff;"></div>
<svg style="left:342px;top:147px" width="10" height="9"><path d="M1 4.5 L3.5 7 L8.5 1.5" stroke="#000" stroke-width="2" fill="none"/></svg>
<div class="t" style="left:357px;top:146px;font-size:11px;color:#000;font-weight:400;">Применять индексы в соответствии с 421пр</div>
<div style="left:598px;top:145px;width:212px;height:15px;background:#ffffff;"></div>
<div class="t" style="left:600px;top:147px;font-size:11px;color:#000;font-weight:400;">за итогом к элементам ПЗ</div>
<div style="left:796px;top:146px;width:14px;height:13px;background:#f0f0f0;"></div>
<svg style="left:800px;top:151px" width="7" height="4"><path d="M0 0 H7 L3.5 4Z" fill="#000"/></svg>
<div style="left:334px;top:166px;width:799px;height:1px;background:#a0a0a0;"></div>
<div style="left:335px;top:167px;width:144px;height:559px;background:#ffffff;"></div>
<div style="left:334px;top:167px;width:1px;height:560px;background:#a0a0a0;"></div>
<div style="left:479px;top:167px;width:1px;height:560px;background:#a0a0a0;"></div>
<div style="left:336px;top:168px;width:143px;height:16px;background:#0078d7;"></div>
<div class="t" style="left:342px;top:170px;font-size:11px;color:#ffffff;font-weight:400;">Уровни цен (1)</div>
<div class="t" style="left:342px;top:186px;font-size:11px;color:#000;font-weight:400;">Типовой расчет</div>
<div class="t" style="left:342px;top:202px;font-size:11px;color:#000;font-weight:400;">Способ расчета</div>
<div class="t" style="left:342px;top:218px;font-size:11px;color:#000;font-weight:400;">Поправки</div>
<div class="t" style="left:342px;top:234px;font-size:11px;color:#000;font-weight:400;">Работа со строками</div>
<div class="t" style="left:342px;top:250px;font-size:11px;color:#000;font-weight:400;">Поисковые маршруты</div>
<div class="t" style="left:342px;top:266px;font-size:11px;color:#000;font-weight:400;">Наименования</div>
<div class="t" style="left:342px;top:282px;font-size:11px;color:#000;font-weight:400;">Описание</div>
<div class="t" style="left:342px;top:298px;font-size:11px;color:#000;font-weight:400;">Должностные лица</div>
<div class="t" style="left:342px;top:314px;font-size:11px;color:#000;font-weight:400;">Статистика</div>
<div class="t" style="left:342px;top:330px;font-size:11px;color:#000;font-weight:400;">Ревизия</div>
<svg style="left:512px;top:172px" width="14" height="16" viewBox="0 0 14 16"><rect x="4" y="0" width="7" height="7" rx="1.6" fill="#f28a12"/><path d="M7.5 1.3 L9.7 3.5 L7.5 5.7 L5.3 3.5Z" fill="#fff"/><circle cx="7.5" cy="3.5" r="0.9" fill="#f28a12"/><rect x="0.5" y="6.5" width="5" height="8" rx="0.8" fill="#7a6000" stroke="#6e5800" stroke-width="1"/><line x1="1.5" y1="8" x2="4.5" y2="8" stroke="#f4d850" stroke-width="1"/><line x1="1.5" y1="9.6" x2="4.5" y2="9.6" stroke="#f4d850" stroke-width="1"/><line x1="1.5" y1="11.2" x2="4.5" y2="11.2" stroke="#f4d850" stroke-width="1"/><line x1="1.5" y1="12.799999999999999" x2="4.5" y2="12.799999999999999" stroke="#f4d850" stroke-width="1"/><rect x="7.5" y="10.5" width="5" height="4" rx="0.8" fill="#7a6000" stroke="#6e5800" stroke-width="1"/><line x1="8.5" y1="12" x2="11.5" y2="12" stroke="#f4d850" stroke-width="1"/><line x1="8.5" y1="13.6" x2="11.5" y2="13.6" stroke="#f4d850" stroke-width="1"/></svg>
<div class="t" style="left:487px;top:188px;font-size:11px;color:#000;font-weight:400;">Уровень цен</div>
<div style="left:559px;top:168px;width:1px;height:35px;background:#b0b0b0;"></div>
<svg style="left:581px;top:171px" width="17" height="17" viewBox="0 0 17 17"><path d="M1.5 15.5 V4.5 L4.5 1.5 H10 V15.5Z" fill="#d8eef6" stroke="#8aa4ac" stroke-width="1"/><path d="M1.8 4.5 L4.5 1.8 V4.5Z" fill="#fff"/><rect x="9" y="0" width="7" height="7" rx="1.6" fill="#f28a12"/><path d="M12.5 1.3 L14.7 3.5 L12.5 5.7 L10.3 3.5Z" fill="#fff"/><circle cx="12.5" cy="3.5" r="0.9" fill="#f28a12"/><rect x="0.5" y="7.5" width="15" height="7" fill="#f0c0f0" stroke="#9c7c9c" stroke-width="1"/><rect x="1" y="8" width="3.5" height="6" fill="#fff"/><path d="M3 9.5 H5.5 M5 8.5 V13 M7 9 V13" stroke="#e030a0" stroke-width="0.9"/><rect x="8.5" y="9.5" width="5" height="6" rx="0.8" fill="#7a6000" stroke="#6e5800" stroke-width="1"/><line x1="9.5" y1="11" x2="12.5" y2="11" stroke="#f4d850" stroke-width="1"/><line x1="9.5" y1="12.6" x2="12.5" y2="12.6" stroke="#f4d850" stroke-width="1"/><line x1="9.5" y1="14.2" x2="12.5" y2="14.2" stroke="#f4d850" stroke-width="1"/></svg>
<div class="t" style="left:569px;top:188px;font-size:11px;color:#000;font-weight:400;">Вид цен</div>
<svg style="left:660px;top:171px" width="17" height="16" viewBox="0 0 17 16"><path d="M1.5 7.0 L9.5 4.5 L16.0 7.5 L8.0 10.0Z" fill="#3a6fd0"/><path d="M1.5 7.0 L8.0 10.0 L16.0 7.5 L16.0 9.0 L8.0 11.5 L1.5 8.5Z" fill="#e8f0f8"/><path d="M1.0 9.5 L8.0 12.5 L16.0 10.0 L16.0 11.5 L8.0 14.0 L1.0 11.0Z" fill="#58a8e8"/><path d="M1.0 11.0 L8.0 14.0 L16.0 11.5 L16.0 13.0 L8.0 15.5 L1.0 12.5Z" fill="#f4f8fc" stroke="#90b0d0" stroke-width="0.5"/><rect x="0" y="0" width="7" height="7" rx="1.6" fill="#f28a12"/><path d="M3.5 1.3 L5.7 3.5 L3.5 5.7 L1.3 3.5Z" fill="#fff"/><circle cx="3.5" cy="3.5" r="0.9" fill="#f28a12"/></svg>
<div class="t" style="left:621px;top:188px;font-size:11px;color:#000;font-weight:400;">Сборник индексов</div>
<svg style="left:788px;top:171px" width="17" height="16" viewBox="0 0 17 16"><path d="M1.5 7.0 L9.5 4.5 L16.0 7.5 L8.0 10.0Z" fill="#3a6fd0"/><path d="M1.5 7.0 L8.0 10.0 L16.0 7.5 L16.0 9.0 L8.0 11.5 L1.5 8.5Z" fill="#e8f0f8"/><path d="M1.0 9.5 L8.0 12.5 L16.0 10.0 L16.0 11.5 L8.0 14.0 L1.0 11.0Z" fill="#58a8e8"/><path d="M1.0 11.0 L8.0 14.0 L16.0 11.5 L16.0 13.0 L8.0 15.5 L1.0 12.5Z" fill="#f4f8fc" stroke="#90b0d0" stroke-width="0.5"/><rect x="0" y="0" width="7" height="7" rx="1.6" fill="#f28a12"/><path d="M3.5 1.3 L5.7 3.5 L3.5 5.7 L1.3 3.5Z" fill="#fff"/><circle cx="3.5" cy="3.5" r="0.9" fill="#f28a12"/><rect x="8" y="0" width="7" height="7" fill="#fff"/><text x="8.6" y="6.3" font-size="7.5" font-family="Liberation Sans" fill="#000">Σ</text></svg>
<div class="t" style="left:728px;top:188px;font-size:11px;color:#000;font-weight:400;">Индексы по смете в целом</div>
<div style="left:875px;top:168px;width:1px;height:35px;background:#b0b0b0;"></div>
<svg style="left:898px;top:172px" width="14" height="14"><path d="M1.6 2.6 L3.4 1.2 L7 5.2 L10.6 1.2 L12.4 2.6 L8 7.3 L11.8 11.8 L11.2 12.4 L7 8.6 L2.8 12.4 L2.2 11.8 L6 7.3 Z" fill="#e8401c"/></svg>
<div class="t" style="left:885px;top:188px;font-size:11px;color:#000;font-weight:400;">Удалить</div>
<div style="left:481px;top:203px;width:155px;height:540px;box-sizing:border-box;border:1px solid #a0a0a0;background:#ffffff;"></div>
<div style="left:482px;top:204px;width:153px;height:23px;background:#f0f0f0;"></div>
<svg style="left:487px;top:210px" width="12" height="12" viewBox="0 0 12 12"><path d="M6 0 L11.5 5.5 H8 V12 H4 V5.5 H0.5Z" fill="#a8a8a8"/></svg>
<svg style="left:510px;top:210px" width="12" height="12" viewBox="0 0 12 12"><path d="M6 12 L11.5 6.5 H8 V0 H4 V6.5 H0.5Z" fill="#a8a8a8"/></svg>
<div style="left:485px;top:231px;width:9px;height:8px;box-sizing:border-box;border:1px solid #808080;background:#fff;"></div>
<div style="left:487px;top:234px;width:5px;height:1px;background:#000;"></div>
<svg style="left:494px;top:234px" width="22" height="22"><path d="M0.5 0.5 H5 M11.5 10 V19.5 H20" stroke="#808080" stroke-width="1" stroke-dasharray="1 1" fill="none"/></svg>
<svg style="left:499px;top:228px" width="18" height="18" viewBox="0 0 18 18">
<rect x="0.5" y="0.5" width="8" height="8" fill="#2f6fdc" stroke="#505050" stroke-width="0.8"/>
<path d="M2 4.3 L3.8 6 L7 2.5" stroke="#fff" stroke-width="1.2" fill="none"/>
<g fill="#e8c050" stroke="#a07810" stroke-width="0.7"><rect x="1.5" y="9.5" width="6" height="7"/><rect x="8.5" y="11.5" width="6" height="5"/></g>
<g stroke="#fff3b0" stroke-width="0.8"><line x1="2.5" y1="12" x2="6.5" y2="12"/><line x1="2.5" y1="14.5" x2="6.5" y2="14.5"/><line x1="9.5" y1="14" x2="13.5" y2="14"/></g>
</svg>
<div class="t" style="left:517px;top:229px;font-size:11px;color:#000;font-weight:400;">Уровень цен</div>
<div style="left:515px;top:243px;width:120px;height:17px;background:#0078d7;"></div>
<div style="left:515px;top:243px;width:120px;height:17px;box-sizing:border-box;border:1px dotted #f0a040;background:transparent;"></div>
<div class="t" style="left:516px;top:244px;font-size:11px;color:#fff;font-weight:400;width:119px;overflow:hidden;">Индексы по смете: 2023</div>
<div style="left:641px;top:203px;width:491px;height:540px;box-sizing:border-box;border:1px solid #a0a0a0;background:#f0f0f0;border-right:none"></div>
<div style="left:643px;top:205px;width:488px;height:23px;background:#8391b4;"></div>
<div style="left:1131px;top:0px;width:1px;height:727px;background:#c8d0e0;"></div>
<div class="t" style="left:651px;top:212px;font-size:11px;color:#000;font-weight:400;">Параметры назначения</div>
<div class="t" style="left:650px;top:238px;font-size:11px;color:#000;font-weight:400;">Обоснование:</div>
<div style="left:651px;top:256px;width:480px;height:15px;background:#ffffff;"></div>
<div class="t" style="left:652px;top:278px;font-size:11px;color:#000;font-weight:400;">Способ расчета:</div>
<div style="left:651px;top:297px;width:480px;height:14px;background:#ffffff;"></div>
<div class="t" style="left:653px;top:298px;font-size:11px;color:#000;font-weight:400;">По статьям</div>
<div class="t" style="left:654px;top:326px;font-size:11px;color:#000;font-weight:400;">Индексы Минстрой России</div>
<div class="t" style="left:660px;top:350px;font-size:11px;color:#000;font-weight:400;">Год:</div>
<div style="left:714px;top:348px;width:107px;height:15px;background:#ffffff;"></div>
<div class="t" style="left:716px;top:350px;font-size:11px;color:#000;font-weight:400;">2023</div>
<div style="left:806px;top:349px;width:14px;height:13px;background:#f0f0f0;"></div>
<svg style="left:810px;top:354px" width="7" height="4"><path d="M0 0 H7 L3.5 4Z" fill="#000"/></svg>
<div class="t" style="left:829px;top:350px;font-size:11px;color:#000;font-weight:400;">Месяц:</div>
<div style="left:872px;top:348px;width:206px;height:15px;background:#ffffff;"></div>
<div class="t" style="left:874px;top:350px;font-size:11px;color:#000;font-weight:400;">Сентябрь</div>
<div style="left:1063px;top:349px;width:14px;height:13px;background:#f0f0f0;"></div>
<svg style="left:1067px;top:354px" width="7" height="4"><path d="M0 0 H7 L3.5 4Z" fill="#000"/></svg>
<div class="t" style="left:660px;top:374px;font-size:11px;color:#000;font-weight:400;">Регион:</div>
<div style="left:714px;top:372px;width:364px;height:15px;background:#ffffff;"></div>
<div class="t" style="left:716px;top:374px;font-size:11px;color:#000;font-weight:400;">37 Ивановская область</div>
<div style="left:1063px;top:373px;width:14px;height:13px;background:#f0f0f0;"></div>
<svg style="left:1067px;top:378px" width="7" height="4"><path d="M0 0 H7 L3.5 4Z" fill="#000"/></svg>
<div class="t" style="left:1095px;top:374px;font-size:11px;color:#000;font-weight:400;width:37px;overflow:hidden;">Подрайон</div>
<div class="t" style="left:660px;top:399px;font-size:11px;color:#000;font-weight:400;">Объект строительства:</div>
<div style="left:784px;top:397px;width:347px;height:15px;background:#ffffff;"></div>
<div class="t" style="left:786px;top:399px;font-size:11px;color:#000;font-weight:400;">Многоквартирные жилые дома Кирпичные</div>
<div class="t" style="left:660px;top:422px;font-size:11px;color:#000;font-weight:400;">Оборудование:</div>
<div style="left:784px;top:420px;width:347px;height:15px;background:#ffffff;"></div>
<div class="t" style="left:785px;top:422px;font-size:11px;color:#000;font-weight:400;">Экономика в целом</div>
<div class="t" style="left:660px;top:445px;font-size:11px;color:#000;font-weight:400;">Прочие затраты:</div>
<div style="left:784px;top:443px;width:347px;height:15px;background:#ffffff;"></div>
<div class="t" style="left:785px;top:445px;font-size:11px;color:#000;font-weight:400;">Экономика в целом</div>
<div style="left:649px;top:467px;width:483px;height:259px;background:#ffffff;"></div>
<div style="left:649px;top:467px;width:484px;height:1px;background:#a0a0a0;"></div>
<div style="left:649px;top:467px;width:1px;height:260px;background:#a0a0a0;"></div>
<div style="left:650px;top:468px;width:482px;height:49px;background:#f0f0f0;"></div>
<div style="left:650px;top:468px;width:483px;height:1px;background:#ffffff;"></div>
<div style="left:650px;top:468px;width:1px;height:49px;background:#ffffff;"></div>
<div style="left:839px;top:468px;width:1px;height:259px;background:#a0a0a0;"></div>
<div style="left:840px;top:469px;width:1px;height:48px;background:#ffffff;"></div>
<div style="left:840px;top:485px;width:293px;height:1px;background:#a0a0a0;"></div>
<div style="left:841px;top:486px;width:292px;height:1px;background:#ffffff;"></div>
<div style="left:1101px;top:468px;width:1px;height:259px;background:#a0a0a0;"></div>
<div style="left:919px;top:486px;width:1px;height:31px;background:#a0a0a0;"></div>
<div style="left:920px;top:487px;width:1px;height:30px;background:#ffffff;"></div>
<div style="left:984px;top:486px;width:1px;height:31px;background:#a0a0a0;"></div>
<div style="left:985px;top:487px;width:1px;height:30px;background:#ffffff;"></div>
<div style="left:1102px;top:469px;width:1px;height:48px;background:#ffffff;"></div>
<div class="t" style="left:710px;top:480px;font-size:11px;color:#000;font-weight:400;">Статья затрат</div>
<div class="t" style="left:941px;top:471px;font-size:11px;color:#000;font-weight:400;">Инфляторы</div>
<div class="t" style="left:857px;top:489px;font-size:11px;color:#000;font-weight:400;">Значение</div>
<div class="t" style="left:925px;top:489px;font-size:11px;color:#000;font-weight:400;">Значение с</div>
<div class="t" style="left:926px;top:502px;font-size:11px;color:#000;font-weight:400;">поправкой</div>
<div class="t" style="left:1010px;top:489px;font-size:11px;color:#000;font-weight:400;">Обоснование</div>
<div class="t" style="left:1118px;top:489px;font-size:11px;color:#000;font-weight:400;width:11px;overflow:hidden;">Значение</div>
<div style="left:649px;top:516px;width:484px;height:1px;background:#a0a0a0;"></div>
<div style="left:650px;top:517px;width:189px;height:16px;background:#f0f0f0;"></div>
<div style="left:920px;top:517px;width:64px;height:16px;background:#e3e3e3;"></div>
<div style="left:1102px;top:517px;width:30px;height:16px;background:#e3e3e3;"></div>
<div style="left:649px;top:533px;width:484px;height:1px;background:#a0a0a0;"></div>
<div class="t" style="left:654px;top:520px;font-size:11px;color:#000;font-weight:400;">ОЗП</div>
<div class="t" style="left:844px;top:520px;font-size:11px;color:#000;font-weight:400;">29,81</div>
<div class="t" style="left:925px;top:520px;font-size:11px;color:#000;font-weight:400;">29,81</div>
<div class="t" style="left:990px;top:520px;font-size:11px;color:#000;font-weight:400;width:111px;overflow:hidden;">письмо Минстроя Р...</div>
<div style="left:650px;top:534px;width:189px;height:16px;background:#f0f0f0;"></div>
<div style="left:920px;top:534px;width:64px;height:16px;background:#e3e3e3;"></div>
<div style="left:1102px;top:534px;width:30px;height:16px;background:#e3e3e3;"></div>
<div style="left:649px;top:550px;width:484px;height:1px;background:#a0a0a0;"></div>
<div class="t" style="left:654px;top:537px;font-size:11px;color:#000;font-weight:400;">ЗПМ</div>
<div class="t" style="left:844px;top:537px;font-size:11px;color:#000;font-weight:400;">29,81</div>
<div class="t" style="left:925px;top:537px;font-size:11px;color:#000;font-weight:400;">29,81</div>
<div class="t" style="left:990px;top:537px;font-size:11px;color:#000;font-weight:400;width:111px;overflow:hidden;">письмо Минстроя Р...</div>
<div style="left:650px;top:551px;width:189px;height:16px;background:#f0f0f0;"></div>
<div style="left:920px;top:551px;width:64px;height:16px;background:#e3e3e3;"></div>
<div style="left:649px;top:567px;width:484px;height:1px;background:#a0a0a0;"></div>
<div class="t" style="left:654px;top:554px;font-size:11px;color:#000;font-weight:400;">Материалы</div>
<div class="t" style="left:844px;top:554px;font-size:11px;color:#000;font-weight:400;">8,02</div>
<div class="t" style="left:925px;top:554px;font-size:11px;color:#000;font-weight:400;">8,02</div>
<div class="t" style="left:990px;top:554px;font-size:11px;color:#000;font-weight:400;width:111px;overflow:hidden;">письмо Минстроя Р...</div>
<div class="t" style="left:1106px;top:554px;font-size:11px;color:#000;font-weight:400;width:26px;overflow:hidden;">8,02</div>
<div style="left:650px;top:568px;width:189px;height:16px;background:#f0f0f0;"></div>
<div style="left:920px;top:568px;width:64px;height:16px;background:#e3e3e3;"></div>
<div style="left:1102px;top:568px;width:30px;height:16px;background:#e3e3e3;"></div>
<div style="left:649px;top:584px;width:484px;height:1px;background:#a0a0a0;"></div>
<div class="t" style="left:654px;top:571px;font-size:11px;color:#000;font-weight:400;">ЭММ</div>
<div class="t" style="left:844px;top:571px;font-size:11px;color:#000;font-weight:400;">11,2</div>
<div class="t" style="left:925px;top:571px;font-size:11px;color:#000;font-weight:400;">11,2</div>
<div class="t" style="left:990px;top:571px;font-size:11px;color:#000;font-weight:400;width:111px;overflow:hidden;">письмо Минстроя Р...</div>
<div style="left:650px;top:585px;width:189px;height:16px;background:#f0f0f0;"></div>
<div style="left:920px;top:585px;width:64px;height:16px;background:#e3e3e3;"></div>
<div style="left:649px;top:601px;width:484px;height:1px;background:#a0a0a0;"></div>
<div class="t" style="left:654px;top:588px;font-size:11px;color:#000;font-weight:400;">Пусконаладка</div>
<div class="t" style="left:844px;top:588px;font-size:11px;color:#000;font-weight:400;">29,81</div>
<div class="t" style="left:925px;top:588px;font-size:11px;color:#000;font-weight:400;">29,81</div>
<div class="t" style="left:990px;top:588px;font-size:11px;color:#000;font-weight:400;width:111px;overflow:hidden;">письмо Минстроя Р...</div>
<div class="t" style="left:1106px;top:588px;font-size:11px;color:#000;font-weight:400;width:26px;overflow:hidden;">29,81</div>
<div style="left:650px;top:602px;width:189px;height:16px;background:#f0f0f0;"></div>
<div style="left:920px;top:602px;width:64px;height:16px;background:#e3e3e3;"></div>
<div style="left:649px;top:618px;width:484px;height:1px;background:#a0a0a0;"></div>
<div class="t" style="left:654px;top:605px;font-size:11px;color:#000;font-weight:400;">Автоперевозка</div>
<div class="t" style="left:844px;top:605px;font-size:11px;color:#000;font-weight:400;">1</div>
<div class="t" style="left:925px;top:605px;font-size:11px;color:#000;font-weight:400;">1</div>
<div class="t" style="left:1106px;top:605px;font-size:11px;color:#000;font-weight:400;width:26px;overflow:hidden;">1</div>
<div style="left:650px;top:619px;width:189px;height:16px;background:#f0f0f0;"></div>
<div style="left:920px;top:619px;width:64px;height:16px;background:#e3e3e3;"></div>
<div style="left:649px;top:635px;width:484px;height:1px;background:#a0a0a0;"></div>
<div class="t" style="left:654px;top:622px;font-size:11px;color:#000;font-weight:400;">Автомобили-бортовые</div>
<div class="t" style="left:844px;top:622px;font-size:11px;color:#000;font-weight:400;">13,12</div>
<div class="t" style="left:925px;top:622px;font-size:11px;color:#000;font-weight:400;">13,12</div>
<div class="t" style="left:990px;top:622px;font-size:11px;color:#000;font-weight:400;width:111px;overflow:hidden;">письмо Минстроя Р...</div>
<div class="t" style="left:1106px;top:622px;font-size:11px;color:#000;font-weight:400;width:26px;overflow:hidden;">13,12</div>
<div style="left:650px;top:636px;width:189px;height:16px;background:#f0f0f0;"></div>
<div style="left:920px;top:636px;width:64px;height:16px;background:#e3e3e3;"></div>
<div style="left:649px;top:652px;width:484px;height:1px;background:#a0a0a0;"></div>
<div class="t" style="left:654px;top:639px;font-size:11px;color:#000;font-weight:400;">Погрузочно-разгрузочные работы</div>
<div class="t" style="left:844px;top:639px;font-size:11px;color:#000;font-weight:400;">11,2</div>
<div class="t" style="left:925px;top:639px;font-size:11px;color:#000;font-weight:400;">11,2</div>
<div class="t" style="left:990px;top:639px;font-size:11px;color:#000;font-weight:400;width:111px;overflow:hidden;">письмо Минстроя Р...</div>
<div class="t" style="left:1106px;top:639px;font-size:11px;color:#000;font-weight:400;width:26px;overflow:hidden;">11,2</div>
<div style="left:650px;top:653px;width:189px;height:16px;background:#f0f0f0;"></div>
<div style="left:920px;top:653px;width:64px;height:16px;background:#e3e3e3;"></div>
<div style="left:649px;top:669px;width:484px;height:1px;background:#a0a0a0;"></div>
<div class="t" style="left:654px;top:656px;font-size:11px;color:#000;font-weight:400;">Автомобили-самосвалы</div>
<div class="t" style="left:844px;top:656px;font-size:11px;color:#000;font-weight:400;">11,52</div>
<div class="t" style="left:925px;top:656px;font-size:11px;color:#000;font-weight:400;">11,52</div>
<div class="t" style="left:990px;top:656px;font-size:11px;color:#000;font-weight:400;width:111px;overflow:hidden;">письмо Минстроя Р...</div>
<div class="t" style="left:1106px;top:656px;font-size:11px;color:#000;font-weight:400;width:26px;overflow:hidden;">11,52</div>
<div style="left:650px;top:670px;width:189px;height:16px;background:#f0f0f0;"></div>
<div style="left:920px;top:670px;width:64px;height:16px;background:#e3e3e3;"></div>
<div style="left:649px;top:686px;width:484px;height:1px;background:#a0a0a0;"></div>
<div class="t" style="left:654px;top:673px;font-size:11px;color:#000;font-weight:400;">Автомобили-панелевозы</div>
<div class="t" style="left:844px;top:673px;font-size:11px;color:#000;font-weight:400;">12,16</div>
<div class="t" style="left:925px;top:673px;font-size:11px;color:#000;font-weight:400;">12,16</div>
<div class="t" style="left:990px;top:673px;font-size:11px;color:#000;font-weight:400;width:111px;overflow:hidden;">письмо Минстроя Р...</div>
<div class="t" style="left:1106px;top:673px;font-size:11px;color:#000;font-weight:400;width:26px;overflow:hidden;">12,16</div>
<div style="left:650px;top:687px;width:189px;height:16px;background:#f0f0f0;"></div>
<div style="left:920px;top:687px;width:64px;height:16px;background:#e3e3e3;"></div>
<div style="left:649px;top:703px;width:484px;height:1px;background:#a0a0a0;"></div>
<div class="t" style="left:654px;top:690px;font-size:11px;color:#000;font-weight:400;">Автомобили-трубоплетевозы</div>
<div class="t" style="left:844px;top:690px;font-size:11px;color:#000;font-weight:400;">9,29</div>
<div class="t" style="left:925px;top:690px;font-size:11px;color:#000;font-weight:400;">9,29</div>
<div class="t" style="left:990px;top:690px;font-size:11px;color:#000;font-weight:400;width:111px;overflow:hidden;">письмо Минстроя Р...</div>
<div class="t" style="left:1106px;top:690px;font-size:11px;color:#000;font-weight:400;width:26px;overflow:hidden;">9,29</div>
<div style="left:650px;top:704px;width:189px;height:16px;background:#f0f0f0;"></div>
<div style="left:920px;top:704px;width:64px;height:16px;background:#e3e3e3;"></div>
<div style="left:649px;top:720px;width:484px;height:1px;background:#a0a0a0;"></div>
<div class="t" style="left:654px;top:707px;font-size:11px;color:#000;font-weight:400;">Автобетоносмесители</div>
<div class="t" style="left:844px;top:707px;font-size:11px;color:#000;font-weight:400;">9,55</div>
<div class="t" style="left:925px;top:707px;font-size:11px;color:#000;font-weight:400;">9,55</div>
<div class="t" style="left:990px;top:707px;font-size:11px;color:#000;font-weight:400;width:111px;overflow:hidden;">письмо Минстроя Р...</div>
<div class="t" style="left:1106px;top:707px;font-size:11px;color:#000;font-weight:400;width:26px;overflow:hidden;">9,55</div>
<div style="left:650px;top:721px;width:482px;height:1px;background:#f0f0f0;"></div>
<div style="left:641px;top:722px;width:492px;height:1px;background:#a0a0a0;"></div>
<div style="left:642px;top:723px;width:490px;height:1px;background:#f0f0f0;"></div>
<div style="left:641px;top:724px;width:492px;height:1px;background:#a0a0a0;"></div>
<div style="left:642px;top:725px;width:490px;height:1px;background:#ffffff;"></div>
<svg style="left:0;top:0" width="1132" height="726" viewBox="0 0 1132 726">
<g fill="none" stroke="#e43c31" stroke-width="3" stroke-linejoin="round">
<rect x="68.5" y="34.5" width="268" height="36" rx="4"/>
<rect x="335" y="138" width="478.5" height="28" rx="4"/>
<rect x="513.5" y="238.5" width="130" height="24" rx="4"/>
<rect x="649.5" y="654.5" width="261" height="18" rx="4"/>
<rect x="3.5" y="551.5" width="251" height="20" rx="4"/>
</g>
<g fill="none" stroke="#e43c31" stroke-width="4" stroke-linecap="round">
<path d="M233 75 C 287 185.6, 361 242.8, 485 245"/>
<path d="M608 267 L 726 624"/>
<path d="M643 670 L 278 576"/>
</g>
<g fill="#e43c31">
<path d="M479 232 L507 245 L480 258 Z"/>
<path d="M714 627 L734 649 L740 618 Z"/>
<path d="M286 564 L257 571 L279 589 Z"/>
</g>
</svg></body></html>
